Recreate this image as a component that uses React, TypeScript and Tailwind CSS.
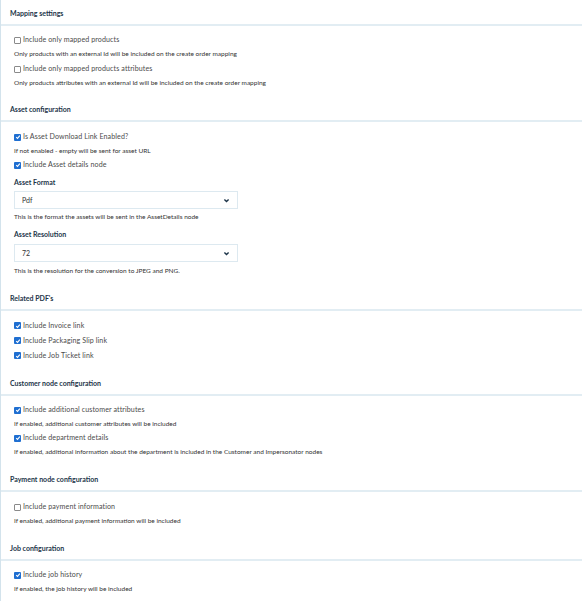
import React from 'react'

const font = { fontFamily: 'Lato, "Open Sans", sans-serif' }

function Box({ checked }: { checked?: boolean }) {
  if (checked) {
    return (
      <span className="w-[7px] h-[7px] rounded-[1px] bg-[#1f6fd1] flex items-center justify-center shrink-0">
        <svg viewBox="0 0 10 10" className="w-[6px] h-[6px]">
          <path d="M2 5.2 L4.2 7.3 L8 2.8" fill="none" stroke="#fff" strokeWidth="1.8" />
        </svg>
      </span>
    )
  }
  return <span className="w-[7px] h-[7px] rounded-[1px] border border-[#8a8a8a] bg-white shrink-0" />
}

function Check({ label, checked, h = 'h-[14px]' }: { label: string; checked?: boolean; h?: string }) {
  return (
    <div className={`${h} flex items-center gap-[2px] pl-[13px] text-[7.1px] tracking-[0.1px] text-[#4b4b4b]`}>
      <Box checked={checked} />
      <span className="leading-none">{label}</span>
    </div>
  )
}

function Hint({ children, h = 'h-[13px]' }: { children: React.ReactNode; h?: string }) {
  return <div className={`${h} flex items-center pl-[13px] text-[6.5px] text-[#333]`}>{children}</div>
}

function Header({ title }: { title: string }) {
  return (
    <div className="h-[26px] pt-[2px] flex items-center pl-[9px] text-[7px] font-bold text-[#1d3549] border-b-2 border-[#e2edf3]">
      {title}
    </div>
  )
}

function Label({ text }: { text: string }) {
  return (
    <div className="h-[14px] mt-[3px] flex items-center pl-[13px] text-[7px] font-bold text-[#1d3549]">{text}</div>
  )
}

function Select({ value, mt }: { value: string; mt: string }) {
  return (
    <div className={`${mt} ml-[13px] w-[224px] h-[18px] border border-[#dde9f0] bg-white flex items-center justify-between px-[7px] text-[7px] text-[#333]`}>
      <span>{value}</span>
      <svg viewBox="0 0 10 10" className="w-[7px] h-[7px]">
        <path d="M2 3.5 L5 6.5 L8 3.5" fill="none" stroke="#1d3549" strokeWidth="2" />
      </svg>
    </div>
  )
}

export default function App() {
  return (
    <div style={font} className="w-[582px] h-[601px] bg-white border-l border-[#d3e3ec] overflow-hidden">
      <Header title="Mapping settings" />
      <div className="pt-[7px] pb-[7px]">
        <Check label="Include only mapped products" />
        <Hint>Only products with an external Id will be included on the create order mapping</Hint>
        <div className="mt-[2px]">
          <Check label="Include only mapped products attributes" />
        </div>
        <Hint>Only products attributes with an external Id will be included on the create order mapping</Hint>
      </div>

      <Header title="Asset configuration" />
      <div className="pt-[8px] pb-[7px]">
        <Check label="Is Asset Download Link Enabled?" checked />
        <Hint h="h-[14px]">If not enabled - empty will be sent for asset URL</Hint>
        <Check label="Include Asset details node" checked />
        <Label text="Asset Format" />
        <Select value="Pdf" mt="mt-[2px]" />
        <div className="mt-[1px]">
          <Hint h="h-[14px]">This is the format the assets will be sent in the AssetDetails node</Hint>
        </div>
        <Label text="Asset Resolution" />
        <Select value="72" mt="mt-[3px]" />
        <div className="mt-[2px]">
          <Hint h="h-[14px]">This is the resolution for the conversion to JPEG and PNG.</Hint>
        </div>
      </div>

      <Header title="Related PDF's" />
      <div className="pt-[7px] pb-[7px]">
        <Check label="Include Invoice link" checked h="h-[15px]" />
        <Check label="Include Packaging Slip link" checked h="h-[15px]" />
        <Check label="Include Job Ticket link" checked h="h-[15px]" />
      </div>

      <Header title="Customer node configuration" />
      <div className="pt-[7px] pb-[7px]">
        <Check label="Include additional customer attributes" checked />
        <Hint>If enabled, additional customer attributes will be included</Hint>
        <div className="mt-[1px]">
          <Check label="Include department details" checked />
        </div>
        <Hint h="h-[14px]">If enabled, additional information about the department is included in the Customer and Impersonator nodes</Hint>
      </div>

      <Header title="Payment node configuration" />
      <div className="pt-[8px] pb-[8px]">
        <Check label="Include payment information" />
        <Hint>If enabled, additional payment information will be included</Hint>
      </div>

      <Header title="Job configuration" />
      <div className="pt-[7px] pb-[7px]">
        <Check label="Include job history" checked />
        <Hint>If enabled, the job history will be included</Hint>
      </div>
    </div>
  )
}
